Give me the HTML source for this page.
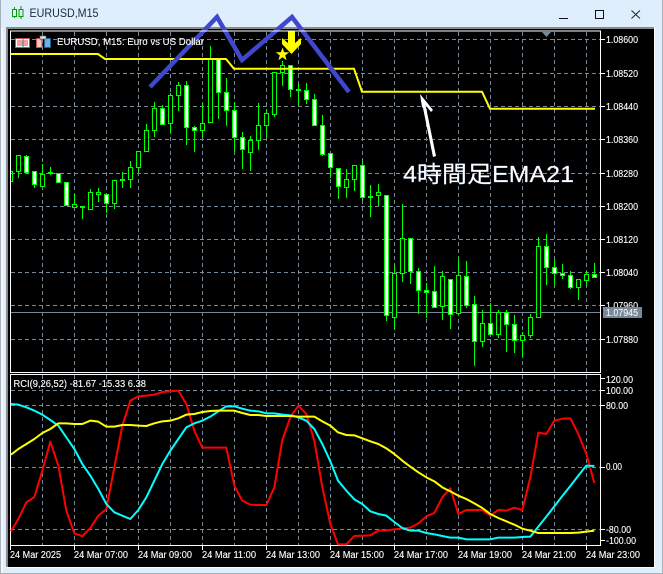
<!DOCTYPE html>
<html><head><meta charset="utf-8"><style>
html,body{margin:0;padding:0;width:663px;height:574px;overflow:hidden;background:#deeefc}
svg{display:block;position:absolute;left:0;top:0}
text{font-family:"Liberation Sans","Noto Sans CJK JP",sans-serif;fill:#fff;font-size:10px;stroke:#fff;stroke-width:.12px}
.h{fill:#000;stroke:#0f0;stroke-width:1}
.f{fill:#fff;stroke:#0f0;stroke-width:1}
</style></head><body>
<svg width="663" height="574" viewBox="0 0 663 574">
<rect width="663" height="574" fill="#deeefc"/>
<rect x="0" y="0" width="1" height="574" fill="#a8b0b8"/>
<rect x="1" y="28" width="2" height="546" fill="#f2f8fd"/>
<rect x="662" y="0" width="1" height="574" fill="#a8b0b8"/>
<rect x="0" y="573" width="663" height="1" fill="#a8b0b8"/>
<rect x="6" y="27" width="649" height="541" fill="#fbfdff"/>
<rect x="6" y="27" width="648" height="2" fill="#8a8a8a"/>
<rect x="6" y="27" width="2" height="540" fill="#8a8a8a"/>
<rect x="8" y="29" width="646" height="538" fill="#000"/>

<!-- title bar -->
<path d="M14.5 7V18M21 6V19" stroke="#00a000" stroke-width="1"/>
<rect x="12.5" y="9.5" width="4" height="7" fill="#deeefc" stroke="#00a000"/>
<rect x="19" y="9.5" width="4" height="7" fill="#deeefc" stroke="#00a000"/>
<text x="29.5" y="17" style="fill:#1c2a38;stroke:none;font-size:12px" textLength="69" lengthAdjust="spacingAndGlyphs">EURUSD,M15</text>
<rect x="559" y="18" width="9" height="1" fill="#111"/>
<rect x="595.5" y="10.5" width="8" height="8" fill="none" stroke="#111"/>
<path d="M631.5 10.5L640 18.5M640 10.5L631.5 18.5" stroke="#222" stroke-width="1"/>

<!-- grid main -->
<path d="M11 39.5H600M11 73.5H600M11 106.5H600M11 139.5H600M11 173.5H600M11 206.5H600M11 239.5H600M11 272.5H600M11 305.5H600M11 339.5H600" stroke="#778899" stroke-dasharray="4 3" fill="none"/>
<path d="M42.5 32V372M74.5 32V372M106.5 32V372M138.5 32V372M170.5 32V372M202.5 32V372M234.5 32V372M266.5 32V372M298.5 32V372M330.5 32V372M362.5 32V372M394.5 32V372M426.5 32V372M458.5 32V372M490.5 32V372M522.5 32V372M554.5 32V372M586.5 32V372" stroke="#778899" stroke-dasharray="4 3" fill="none"/>
<path d="M11 312.5H600" stroke="#778899"/>

<!-- wicks -->
<path stroke="#0f0" fill="none" d="M18.5 155V178M26.5 155V172M34.5 171V188M42.5 164V186M50.5 167V175M58.5 173V183M66.5 182V206M74.5 194V208M82.5 206V219M90.5 189V209M98.5 188V202M106.5 193V213M114.5 180V209M122.5 172V188M130.5 161V188M138.5 151V172M146.5 124V151M154.5 102V137M162.5 105V125M170.5 93V133M178.5 82V111M186.5 81V145M194.5 126V152M202.5 104V137M210.5 46V122M218.5 59V119M226.5 78V126M234.5 102V152M242.5 132V169M250.5 136V171M258.5 103V150M266.5 109V138M274.5 72V117M282.5 61V86M290.5 65V97M298.5 84V106M306.5 83V104M314.5 94V125M322.5 115V156M330.5 153V178M338.5 168V199M346.5 169V198M354.5 165V191M362.5 161V200M370.5 185V217M378.5 184V206M386.5 195V321M394.5 265V329M402.5 204V282M410.5 238V284M418.5 268V314M426.5 283V318M434.5 266V307M442.5 271V320M450.5 279V329M458.5 258V315M466.5 261V308M474.5 296V366M482.5 310V347M490.5 303V335M498.5 310V338M506.5 310V352M514.5 315V353M522.5 332V357M530.5 314V338M538.5 237V317M546.5 234V285M554.5 259V285M562.5 264V279M570.5 271V289M578.5 279V300M586.5 272V286M594.5 263V277"/>
<path d="M11 171.5H12.5V181.5H11" stroke="#0f0" fill="none"/>
<!-- dashes -->
<path stroke="#0f0" stroke-width="2" d="M48 173H53M80 207H85M120 180H125M296 90H301"/>
<!-- hollow -->
<g class="hh">
<rect class="h" x="16.5" y="155.5" width="4" height="16"/>
<rect class="h" x="40.5" y="174.5" width="4" height="12"/>
<rect class="h" x="72.5" y="204.5" width="4" height="3"/>
<rect class="h" x="88.5" y="192.5" width="4" height="17"/>
<rect class="h" x="96.5" y="192.5" width="4" height="2"/>
<rect class="h" x="112.5" y="180.5" width="4" height="23"/>
<rect class="h" x="128.5" y="167.5" width="4" height="12"/>
<rect class="h" x="136.5" y="151.5" width="4" height="16"/>
<rect class="h" x="144.5" y="130.5" width="4" height="21"/>
<rect class="h" x="152.5" y="108.5" width="4" height="22"/>
<rect class="h" x="168.5" y="95.5" width="4" height="28"/>
<rect class="h" x="176.5" y="85.5" width="4" height="10"/>
<rect class="h" x="200.5" y="123.5" width="4" height="7"/>
<rect class="h" x="208.5" y="59.5" width="4" height="63"/>
<rect class="h" x="248.5" y="140.5" width="4" height="12"/>
<rect class="h" x="256.5" y="125.5" width="4" height="15"/>
<rect class="h" x="264.5" y="113.5" width="4" height="12"/>
<rect class="h" x="272.5" y="72.5" width="4" height="42"/>
<rect class="h" x="280.5" y="65.5" width="4" height="7"/>
<rect class="h" x="344.5" y="179.5" width="4" height="8"/>
<rect class="h" x="352.5" y="165.5" width="4" height="14"/>
<rect class="h" x="376.5" y="192.5" width="4" height="3"/>
<rect class="h" x="392.5" y="273.5" width="4" height="44"/>
<rect class="h" x="400.5" y="238.5" width="4" height="35"/>
<rect class="h" x="440.5" y="276.5" width="4" height="30"/>
<rect class="h" x="456.5" y="275.5" width="4" height="38"/>
<rect class="h" x="480.5" y="323.5" width="4" height="18"/>
<rect class="h" x="496.5" y="312.5" width="4" height="22"/>
<rect class="h" x="520.5" y="335.5" width="4" height="5"/>
<rect class="h" x="528.5" y="317.5" width="4" height="18"/>
<rect class="h" x="536.5" y="246.5" width="4" height="71"/>
<rect class="h" x="576.5" y="279.5" width="4" height="8"/>
<rect class="h" x="584.5" y="274.5" width="4" height="6"/>
</g>
<!-- filled -->
<g>
<rect class="f" x="24.5" y="156.5" width="4" height="16"/>
<rect class="f" x="32.5" y="171.5" width="4" height="13"/>
<rect class="f" x="56.5" y="173.5" width="4" height="9"/>
<rect class="f" x="64.5" y="182.5" width="4" height="23"/>
<rect class="f" x="104.5" y="194.5" width="4" height="9"/>
<rect class="f" x="160.5" y="108.5" width="4" height="16"/>
<rect class="f" x="184.5" y="85.5" width="4" height="42"/>
<rect class="f" x="192.5" y="127.5" width="4" height="3"/>
<rect class="f" x="216.5" y="59.5" width="4" height="33"/>
<rect class="f" x="224.5" y="92.5" width="4" height="18"/>
<rect class="f" x="232.5" y="110.5" width="4" height="27"/>
<rect class="f" x="240.5" y="137.5" width="4" height="12"/>
<rect class="f" x="288.5" y="65.5" width="4" height="24"/>
<rect class="f" x="304.5" y="90.5" width="4" height="9"/>
<rect class="f" x="312.5" y="99.5" width="4" height="26"/>
<rect class="f" x="320.5" y="125.5" width="4" height="29"/>
<rect class="f" x="328.5" y="153.5" width="4" height="14"/>
<rect class="f" x="336.5" y="168.5" width="4" height="18"/>
<rect class="f" x="360.5" y="165.5" width="4" height="32"/>
<rect class="f" x="368.5" y="196.5" width="4" height="1"/>
<rect class="f" x="384.5" y="195.5" width="4" height="120"/>
<rect class="f" x="408.5" y="238.5" width="4" height="33"/>
<rect class="f" x="416.5" y="271.5" width="4" height="19"/>
<rect class="f" x="424.5" y="290.5" width="4" height="2"/>
<rect class="f" x="432.5" y="291.5" width="4" height="16"/>
<rect class="f" x="448.5" y="279.5" width="4" height="35"/>
<rect class="f" x="464.5" y="276.5" width="4" height="29"/>
<rect class="f" x="472.5" y="304.5" width="4" height="37"/>
<rect class="f" x="488.5" y="323.5" width="4" height="11"/>
<rect class="f" x="504.5" y="312.5" width="4" height="12"/>
<rect class="f" x="512.5" y="324.5" width="4" height="16"/>
<rect class="f" x="544.5" y="246.5" width="4" height="21"/>
<rect class="f" x="552.5" y="267.5" width="4" height="6"/>
<rect class="f" x="560.5" y="273.5" width="4" height="2"/>
<rect class="f" x="568.5" y="275.5" width="4" height="12"/>
<rect class="f" x="592.5" y="274.5" width="4" height="3"/>
</g>

<!-- 4H EMA -->
<polyline points="11,54 98,54 105,59 226,59 234,68.7 354,68.7 362,91.7 482,91.7 490,108.7 595,108.7" fill="none" stroke="#ff0" stroke-width="2"/>

<!-- signal -->
<polygon points="288,31 295,31 295,43 301,38 301,44 291.5,54 282,44 282,38 288,43" fill="#ff0"/>
<polygon points="282.5,47.5 284.1,52.2 289.2,52.3 285.2,55.4 286.6,60.2 282.5,57.3 278.4,60.2 279.8,55.4 275.8,52.3 280.9,52.2" fill="#ff0"/>

<!-- top triangle -->
<polygon points="542,32 551,32 546.5,37" fill="#778899"/>

<!-- blue lines -->
<polyline points="150,87 217,17 242,60 292,17 349,92" fill="none" stroke="#3f48cc" stroke-width="4.5" stroke-linejoin="miter"/>

<!-- white arrow -->
<polygon points="420,94 433,110 431,112 425.5,105 436,156 433,157 423,108 422,107" fill="#fff"/>
<text x="403" y="182" style="font-size:23px;stroke:#cfe4ff;stroke-width:.2px" textLength="171" lengthAdjust="spacingAndGlyphs">4時間足EMA21</text>

<!-- legend icons -->
<rect x="15.5" y="38.5" width="14" height="9" fill="#fff" stroke="#c0504d"/>
<path d="M17 41H28M17 43H28M17 45H28" stroke="#e03a30"/>
<path d="M23 39V47" stroke="#3a7ab0"/>
<path d="M36.5 47.5V38.5H40L42 41V47.5Z" fill="#f4c8c0" stroke="#c0504d"/>
<path d="M44.5 47.5V38.5H50.5V47.5Z" fill="#6fb0dc" stroke="#1f5f90"/>
<rect x="40" y="36" width="6" height="3" fill="#e8e8e8" stroke="#666" stroke-width=".7"/>
<text x="57" y="45" textLength="147" lengthAdjust="spacingAndGlyphs">EURUSD, M15:  Euro vs US Dollar</text>

<!-- plot borders -->
<path d="M10.5 31V372.5H600.5V31H10.5Z" fill="none" stroke="#fff"/>
<path d="M10.5 374.5H600.5V545.5H10.5Z" fill="none" stroke="#fff"/>

<!-- axis ticks -->
<path stroke="#fff" d="M600 39.5H605M600 73.5H605M600 106.5H605M600 139.5H605M600 173.5H605M600 206.5H605M600 239.5H605M600 272.5H605M600 305.5H605M600 339.5H605M600 378.5H605M600 390.5H605M600 405.5H605M600 467.5H605M600 529.5H605M600 540.5H605"/>

<!-- axis labels -->
<g>
<text x="606" y="43" textLength="32" lengthAdjust="spacingAndGlyphs">1.08600</text>
<text x="606" y="77" textLength="32" lengthAdjust="spacingAndGlyphs">1.08520</text>
<text x="606" y="110" textLength="32" lengthAdjust="spacingAndGlyphs">1.08440</text>
<text x="606" y="143" textLength="32" lengthAdjust="spacingAndGlyphs">1.08360</text>
<text x="606" y="177" textLength="32" lengthAdjust="spacingAndGlyphs">1.08280</text>
<text x="606" y="210" textLength="32" lengthAdjust="spacingAndGlyphs">1.08200</text>
<text x="606" y="243" textLength="32" lengthAdjust="spacingAndGlyphs">1.08120</text>
<text x="606" y="276" textLength="32" lengthAdjust="spacingAndGlyphs">1.08040</text>
<text x="606" y="309" textLength="32" lengthAdjust="spacingAndGlyphs">1.07960</text>
<rect x="603" y="307" width="39" height="11" fill="#778899"/>
<text x="606" y="316" textLength="32" lengthAdjust="spacingAndGlyphs" style="fill:#eef2f5">1.07945</text>
<text x="606" y="343" textLength="32" lengthAdjust="spacingAndGlyphs">1.07880</text>
<text x="606" y="383" textLength="27" lengthAdjust="spacingAndGlyphs">120.00</text>
<text x="606" y="394" textLength="27" lengthAdjust="spacingAndGlyphs">100.00</text>
<text x="606" y="409" textLength="22" lengthAdjust="spacingAndGlyphs">80.00</text>
<text x="606" y="470" textLength="16" lengthAdjust="spacingAndGlyphs">0.00</text>
<text x="606" y="533" textLength="25" lengthAdjust="spacingAndGlyphs">-80.00</text>
<text x="606" y="544" textLength="30" lengthAdjust="spacingAndGlyphs">-100.00</text>
</g>

<!-- grid indicator -->
<path d="M11 390.5H600M11 405.5H600M11 467.5H600M11 529.5H600" stroke="#778899" stroke-dasharray="4 3" fill="none"/>
<path d="M42.5 375V545M74.5 375V545M106.5 375V545M138.5 375V545M170.5 375V545M202.5 375V545M234.5 375V545M266.5 375V545M298.5 375V545M330.5 375V545M362.5 375V545M394.5 375V545M426.5 375V545M458.5 375V545M490.5 375V545M522.5 375V545M554.5 375V545M586.5 375V545" stroke="#778899" stroke-dasharray="4 3" fill="none"/>

<!-- RCI -->
<g transform="translate(0,374) scale(.33333)" fill="none" stroke-width="6" stroke-linejoin="round">
<polyline stroke="#f00" points="33,472 55,435 79,385 103,369 127,290 151,203 175,275 199,410 223,478 247,487 271,462 295,425 319,405 343,280 367,155 391,80 415,67 439,65 463,62 487,54 511,52 535,50 559,90 583,170 607,221 631,221 655,221 679,221 703,335 727,380 751,392 775,393 799,393 823,340 847,198 871,130 895,95 919,120 943,200 967,340 991,450 1014,511 1039,511 1063,486 1087,485 1111,484 1135,470 1159,469 1183,466 1207,463 1231,461 1255,448 1279,427 1303,417 1327,370 1351,343 1375,420 1399,408 1423,408 1447,408 1471,425 1495,408 1519,410 1543,401 1567,408 1591,310 1615,176 1639,180 1663,140 1687,134 1711,133 1735,180 1759,240 1783,327"/>
<polyline stroke="#0ff" points="33,90 55,92 79,100 103,110 127,122 151,138 175,155 199,190 223,225 247,270 271,305 295,345 319,390 343,415 367,425 391,435 415,408 439,370 463,320 487,270 511,230 535,195 559,160 583,148 607,140 631,128 655,112 679,97 703,97 727,104 751,110 775,112 799,118 823,118 847,122 871,124 895,130 919,140 943,165 967,210 991,262 1014,320 1039,350 1063,376 1087,390 1111,412 1135,420 1159,425 1183,444 1207,462 1231,470 1255,470 1279,477 1303,481 1327,486 1351,491 1375,491 1399,496 1423,496 1447,496 1471,496 1495,491 1519,491 1543,491 1567,489 1591,488 1615,458 1639,428 1663,397 1687,366 1711,336 1735,305 1759,275 1783,276"/>
<polyline stroke="#ff0" points="33,242 55,225 79,210 103,195 127,177 151,165 175,148 199,148 223,150 247,150 271,140 295,143 319,158 343,158 367,153 391,153 415,155 439,156 463,148 487,142 511,140 535,133 559,122 583,120 607,114 631,111 655,110 679,110 703,110 727,117 751,123 775,123 799,126 823,126 847,126 871,126 895,128 919,128 943,128 967,142 991,155 1014,175 1039,183 1063,184 1087,193 1111,202 1135,210 1159,223 1183,240 1207,260 1231,278 1255,295 1279,310 1303,322 1327,340 1351,352 1375,365 1399,375 1423,388 1447,402 1471,420 1495,432 1519,442 1543,452 1567,464 1591,470 1615,477 1639,477 1663,477 1687,477 1711,477 1735,476 1759,473 1783,470"/>
</g>
<text x="13.5" y="387" textLength="132.5" lengthAdjust="spacingAndGlyphs">RCI(9,26,52) -81.67 -15.33 6.38</text>

<!-- time ticks + labels -->
<path stroke="#fff" d="M10.5 545V550M74.5 545V550M138.5 545V550M202.5 545V550M266.5 545V550M330.5 545V550M394.5 545V550M458.5 545V550M522.5 545V550M586.5 545V550"/>
<text x="10" y="558" textLength="51" lengthAdjust="spacingAndGlyphs">24 Mar 2025</text>
<text x="74" y="558" textLength="54" lengthAdjust="spacingAndGlyphs">24 Mar 07:00</text>
<text x="138" y="558" textLength="54" lengthAdjust="spacingAndGlyphs">24 Mar 09:00</text>
<text x="202" y="558" textLength="54" lengthAdjust="spacingAndGlyphs">24 Mar 11:00</text>
<text x="266" y="558" textLength="54" lengthAdjust="spacingAndGlyphs">24 Mar 13:00</text>
<text x="330" y="558" textLength="54" lengthAdjust="spacingAndGlyphs">24 Mar 15:00</text>
<text x="394" y="558" textLength="54" lengthAdjust="spacingAndGlyphs">24 Mar 17:00</text>
<text x="458" y="558" textLength="54" lengthAdjust="spacingAndGlyphs">24 Mar 19:00</text>
<text x="522" y="558" textLength="54" lengthAdjust="spacingAndGlyphs">24 Mar 21:00</text>
<text x="586" y="558" textLength="54" lengthAdjust="spacingAndGlyphs">24 Mar 23:00</text>
</svg>
</body></html>
